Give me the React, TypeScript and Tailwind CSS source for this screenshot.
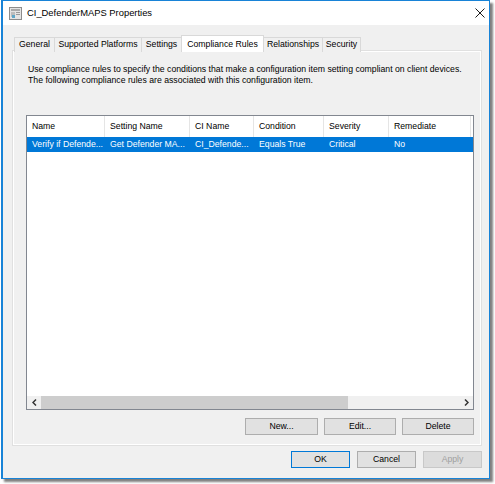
import React from 'react';

const tabs = [
  { label: 'General', w: 'w-[41px]' },
  { label: 'Supported Platforms', w: 'w-[88px]' },
  { label: 'Settings', w: 'w-[41px]' },
  { label: 'Compliance Rules', w: 'w-[83px]', active: true },
  { label: 'Relationships', w: 'w-[60px]' },
  { label: 'Security', w: 'w-[39px]' },
];

const columns = [
  { title: 'Name', value: 'Verify if Defende...', w: 'w-[78px]' },
  { title: 'Setting Name', value: 'Get Defender MA...', w: 'w-[85px]' },
  { title: 'CI Name', value: 'CI_Defende...', w: 'w-[64px]' },
  { title: 'Condition', value: 'Equals True', w: 'w-[70px]' },
  { title: 'Severity', value: 'Critical', w: 'w-[65px]' },
  { title: 'Remediate', value: 'No', w: 'w-[82px]' },
];

const TitleIcon = () => (
  <svg width="13" height="13" viewBox="0 0 13 13">
    <rect x="0.5" y="0.5" width="12" height="12" fill="#e4e4e4" stroke="#8c8c8c" />
    <rect x="2" y="2" width="9" height="2" fill="#a9a9a9" />
    <rect x="2" y="5" width="4" height="5" fill="#bdbdbd" />
    <rect x="7" y="5" width="4" height="1" fill="#9a9a9a" />
    <rect x="7" y="7" width="4" height="1" fill="#9a9a9a" />
    <rect x="3" y="8" width="3" height="3" fill="#5fa7c8" />
  </svg>
);

const CloseIcon = () => (
  <svg width="10" height="10" viewBox="0 0 10 10">
    <path d="M0.5 0.5 L9.5 9.5 M9.5 0.5 L0.5 9.5" stroke="#1a1a1a" strokeWidth="1" />
  </svg>
);

const Chevron = ({ dir }: { dir: 'left' | 'right' }) => (
  <svg width="5" height="7" viewBox="0 0 5 7">
    <path
      d={dir === 'left' ? 'M4 0.5 L1 3.5 L4 6.5' : 'M1 0.5 L4 3.5 L1 6.5'}
      stroke="#333"
      strokeWidth="1.5"
      fill="none"
    />
  </svg>
);

const Button = ({
  children,
  w,
  primary,
  disabled,
}: {
  children: React.ReactNode;
  w: string;
  primary?: boolean;
  disabled?: boolean;
}) => (
  <button
    className={`${w} h-[17px] flex items-center justify-center border text-[8.7px] ${
      disabled
        ? 'bg-[#dcdcdc] border-[#c8c8c8] text-[#a0a0a0]'
        : primary
        ? 'bg-[#e1e1e1] border-[#0078d7] text-black'
        : 'bg-[#e1e1e1] border-[#adadad] text-black'
    }`}
  >
    {children}
  </button>
);

export default function App() {
  return (
    <div className="w-[495px] h-[484px] bg-white pl-[1px] font-['Liberation_Sans',Arial,sans-serif]">
      <div className="w-[489px] h-[479px] flex flex-col border border-[#1883d7] border-l-2 shadow-[3px_3px_2px_rgba(0,0,0,0.5)]">
        {/* title bar */}
        <div className="h-[24px] bg-white flex items-center pl-[6px] pr-[4px] shrink-0">
          <TitleIcon />
          <span className="ml-[5px] text-[9.4px] text-black">CI_DefenderMAPS Properties</span>
          <div className="ml-auto">
            <CloseIcon />
          </div>
        </div>

        <div className="flex-1 flex flex-col bg-[#f0f0f0] pl-[10px] pr-[8px] pt-[10px] pb-[10px]">
          {/* tab strip */}
          <div className="flex items-end h-[17px] -mb-px ml-[1px] relative z-10">
            {tabs.map(t =>
              t.active ? (
                <div
                  key={t.label}
                  className={`${t.w} h-[17px] -ml-px flex items-start justify-center pt-[2px] bg-white border border-b-0 border-[#d9d9d9] text-[8.7px] text-black whitespace-nowrap`}
                >
                  {t.label}
                </div>
              ) : (
                <div
                  key={t.label}
                  className={`${t.w} h-[15px] -ml-px first:ml-0 flex items-center justify-center bg-[#f0f0f0] border border-b-0 border-[#d9d9d9] text-[8.7px] text-black whitespace-nowrap`}
                >
                  {t.label}
                </div>
              )
            )}
          </div>

          {/* tab page */}
          <div className="flex-1 flex flex-col border border-white shadow-[0_0_0_1px_#e0e0e0] pl-[12px] pr-[6px] pt-[12px] pb-[9px]">
            <p className="pl-[2px] text-[8.7px] leading-[11px] text-black whitespace-nowrap">
              Use compliance rules to specify the conditions that make a configuration item setting compliant on client devices.
              <br />
              The following compliance rules are associated with this configuration item.
            </p>

            {/* rules list */}
            <div className="flex-1 mt-[29px] flex flex-col bg-white border border-[#828790]">
              <div className="flex h-[21px] shrink-0">
                {columns.map(c => (
                  <div
                    key={c.title}
                    className={`${c.w} h-full flex items-center pl-[5px] border-r border-[#e5e5e5] text-[8.7px] text-black`}
                  >
                    {c.title}
                  </div>
                ))}
              </div>
              <div className="flex h-[15px] shrink-0 bg-[#0078d7]">
                {columns.map(c => (
                  <div
                    key={c.title}
                    className={`${c.w} h-full flex items-center pl-[5px] text-[8.7px] text-white whitespace-nowrap`}
                  >
                    {c.value}
                  </div>
                ))}
              </div>
              <div className="flex-1" />
              {/* horizontal scrollbar */}
              <div className="h-[13px] shrink-0 flex items-center bg-[#f0f0f0]">
                <div className="w-[14px] h-full flex items-center justify-center">
                  <Chevron dir="left" />
                </div>
                <div className="w-[307px] h-full bg-[#cdcdcd]" />
                <div className="flex-1" />
                <div className="w-[13px] h-full flex items-center justify-center">
                  <Chevron dir="right" />
                </div>
              </div>
            </div>

            <div className="flex justify-end gap-[6px] mt-[8px]">
              <Button w="w-[73px]">New...</Button>
              <Button w="w-[72px]">Edit...</Button>
              <Button w="w-[72px]">Delete</Button>
            </div>
          </div>

          {/* dialog buttons */}
          <div className="flex justify-end gap-[7px] mt-[6px] mr-[-1px]">
            <Button w="w-[59px]" primary>
              OK
            </Button>
            <Button w="w-[59px]">Cancel</Button>
            <Button w="w-[59px]" disabled>
              Apply
            </Button>
          </div>
        </div>
      </div>
    </div>
  );
}
